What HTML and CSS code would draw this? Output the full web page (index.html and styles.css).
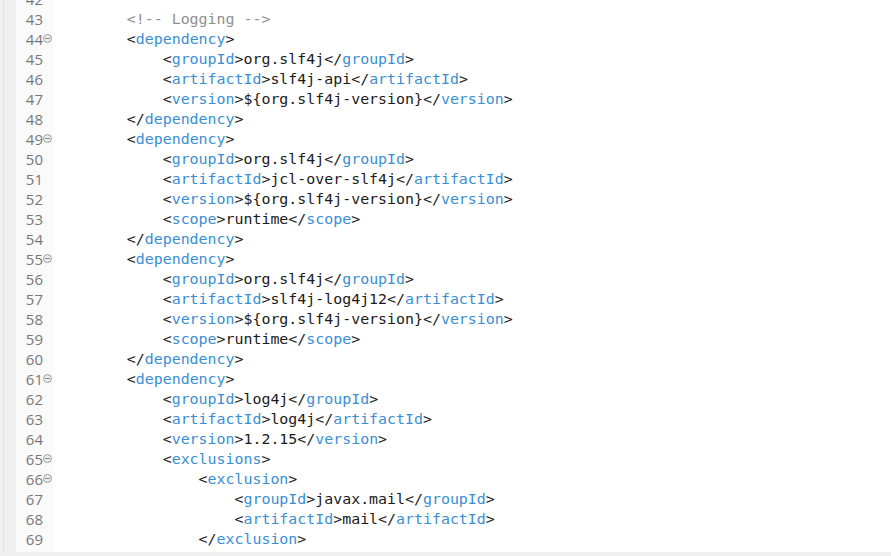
FILE: index.html
```html
<!DOCTYPE html>
<html>
<head>
<meta charset="utf-8">
<link rel="stylesheet" href="styles.css">
</head>
<body>
<div class="window">
  <div class="editor">
    <div class="strip"></div>
    <div class="gutter">
      <div class="scroll">
        <div class="ln">42</div>
        <div class="ln">43</div>
        <div class="ln fold">44</div>
        <div class="ln">45</div>
        <div class="ln">46</div>
        <div class="ln">47</div>
        <div class="ln">48</div>
        <div class="ln fold">49</div>
        <div class="ln">50</div>
        <div class="ln">51</div>
        <div class="ln">52</div>
        <div class="ln">53</div>
        <div class="ln">54</div>
        <div class="ln fold">55</div>
        <div class="ln">56</div>
        <div class="ln">57</div>
        <div class="ln">58</div>
        <div class="ln">59</div>
        <div class="ln">60</div>
        <div class="ln fold">61</div>
        <div class="ln">62</div>
        <div class="ln">63</div>
        <div class="ln">64</div>
        <div class="ln fold">65</div>
        <div class="ln fold">66</div>
        <div class="ln">67</div>
        <div class="ln">68</div>
        <div class="ln">69</div>
      </div>
    </div>
    <div class="code">
      <div class="scroll">
<div class="line"> </div>
<div class="line">        <span class="c">&lt;!-- Logging --&gt;</span></div>
<div class="line">        &lt;<span class="t">dependency</span>&gt;</div>
<div class="line">            &lt;<span class="t">groupId</span>&gt;org.slf4j&lt;/<span class="t">groupId</span>&gt;</div>
<div class="line">            &lt;<span class="t">artifactId</span>&gt;slf4j-api&lt;/<span class="t">artifactId</span>&gt;</div>
<div class="line">            &lt;<span class="t">version</span>&gt;${org.slf4j-version}&lt;/<span class="t">version</span>&gt;</div>
<div class="line">        &lt;/<span class="t">dependency</span>&gt;</div>
<div class="line">        &lt;<span class="t">dependency</span>&gt;</div>
<div class="line">            &lt;<span class="t">groupId</span>&gt;org.slf4j&lt;/<span class="t">groupId</span>&gt;</div>
<div class="line">            &lt;<span class="t">artifactId</span>&gt;jcl-over-slf4j&lt;/<span class="t">artifactId</span>&gt;</div>
<div class="line">            &lt;<span class="t">version</span>&gt;${org.slf4j-version}&lt;/<span class="t">version</span>&gt;</div>
<div class="line">            &lt;<span class="t">scope</span>&gt;runtime&lt;/<span class="t">scope</span>&gt;</div>
<div class="line">        &lt;/<span class="t">dependency</span>&gt;</div>
<div class="line">        &lt;<span class="t">dependency</span>&gt;</div>
<div class="line">            &lt;<span class="t">groupId</span>&gt;org.slf4j&lt;/<span class="t">groupId</span>&gt;</div>
<div class="line">            &lt;<span class="t">artifactId</span>&gt;slf4j-log4j12&lt;/<span class="t">artifactId</span>&gt;</div>
<div class="line">            &lt;<span class="t">version</span>&gt;${org.slf4j-version}&lt;/<span class="t">version</span>&gt;</div>
<div class="line">            &lt;<span class="t">scope</span>&gt;runtime&lt;/<span class="t">scope</span>&gt;</div>
<div class="line">        &lt;/<span class="t">dependency</span>&gt;</div>
<div class="line">        &lt;<span class="t">dependency</span>&gt;</div>
<div class="line">            &lt;<span class="t">groupId</span>&gt;log4j&lt;/<span class="t">groupId</span>&gt;</div>
<div class="line">            &lt;<span class="t">artifactId</span>&gt;log4j&lt;/<span class="t">artifactId</span>&gt;</div>
<div class="line">            &lt;<span class="t">version</span>&gt;1.2.15&lt;/<span class="t">version</span>&gt;</div>
<div class="line">            &lt;<span class="t">exclusions</span>&gt;</div>
<div class="line">                &lt;<span class="t">exclusion</span>&gt;</div>
<div class="line">                    &lt;<span class="t">groupId</span>&gt;javax.mail&lt;/<span class="t">groupId</span>&gt;</div>
<div class="line">                    &lt;<span class="t">artifactId</span>&gt;mail&lt;/<span class="t">artifactId</span>&gt;</div>
<div class="line">                &lt;/<span class="t">exclusion</span>&gt;</div>
      </div>
    </div>
  </div>
  <div class="hbar"></div>
</div>
</body>
</html>
```

FILE: styles.css
```css
html, body {
  margin: 0;
  padding: 0;
  background: #f0f0f0;
}

.window {
  width: 891px;
  height: 556px;
  display: flex;
  flex-direction: column;
}

.editor {
  height: 552px;
  display: flex;
  overflow: hidden;
}

.hbar {
  flex: 1;
  background: #efefef;
}

.strip {
  width: 12px;
  margin-left: 3px;
  border-left: 1px solid #e3e3e3;
  background: #f0f0f0;
}

.gutter {
  width: 37px;
  background: #fafafa;
  overflow: hidden;
}

.scroll {
  margin-top: -11px;
}

.ln {
  height: 20px;
  line-height: 20px;
  box-sizing: border-box;
  padding-right: 10px;
  text-align: right;
  font-family: "Open Sans", "Noto Sans", sans-serif;
  font-size: 15px;
  color: #787878;
  position: relative;
}

.ln.fold::after {
  content: "";
  position: absolute;
  right: 1px;
  top: 5px;
  width: 7px;
  height: 7px;
  border: 1px solid #a0a0a0;
  border-radius: 50%;
  background: linear-gradient(#8c8c8c, #8c8c8c) center / 5px 1px no-repeat, #ececec;
}

.code {
  flex: 1;
  background: #ffffff;
  overflow: hidden;
  padding-left: 2px;
}

.line {
  height: 20px;
  line-height: 20px;
  white-space: pre;
  font-family: "DejaVu Sans Mono", "Liberation Mono", monospace;
  font-size: 14.92px;
  color: #1a1a1a;
}

.t {
  color: #3a8fd3;
}

.c {
  color: #8f8f8f;
}
```
